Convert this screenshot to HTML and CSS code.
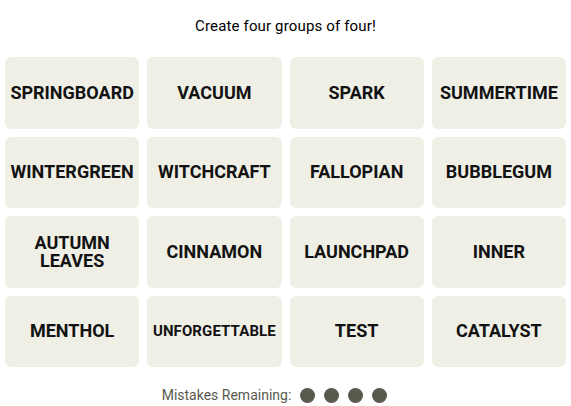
FILE: index.html
```html
<!DOCTYPE html>
<html lang="en">
<head>
<meta charset="utf-8">
<title>Connections</title>
<link rel="stylesheet" href="styles.css">
</head>
<body>
<main class="game">
  <p class="prompt">Create four groups of four!</p>
  <section class="board">
    <div class="tile">SPRINGBOARD</div>
    <div class="tile">VACUUM</div>
    <div class="tile">SPARK</div>
    <div class="tile">SUMMERTIME</div>
    <div class="tile">WINTERGREEN</div>
    <div class="tile">WITCHCRAFT</div>
    <div class="tile">FALLOPIAN</div>
    <div class="tile">BUBBLEGUM</div>
    <div class="tile">AUTUMN<br>LEAVES</div>
    <div class="tile">CINNAMON</div>
    <div class="tile">LAUNCHPAD</div>
    <div class="tile">INNER</div>
    <div class="tile">MENTHOL</div>
    <div class="tile tile-small">UNFORGETTABLE</div>
    <div class="tile">TEST</div>
    <div class="tile">CATALYST</div>
  </section>
  <div class="mistakes">
    <span class="mistakes-label">Mistakes Remaining:</span>
    <span class="dots">
      <span class="dot"></span><span class="dot"></span><span class="dot"></span><span class="dot"></span>
    </span>
  </div>
</main>
</body>
</html>
```
FILE: styles.css
```css
html, body {
  margin: 0;
  padding: 0;
  background: #ffffff;
}
.game {
  padding: 16px 5px 0;
  font-family: Roboto, "Liberation Sans", Arial, sans-serif;
  color: #000;
}
.prompt {
  margin: 0 0 21px;
  font-size: 15px;
  line-height: 20px;
  letter-spacing: 0.15px;
  text-align: center;
  font-weight: 400;
}
.board {
  display: grid;
  grid-template-columns: repeat(4, 1fr);
  grid-auto-rows: 71.5px;
  gap: 8px;
}
.tile {
  background: #efefe6;
  border-radius: 6px;
  display: flex;
  align-items: center;
  justify-content: center;
  text-align: center;
  font-weight: 700;
  font-size: 18px;
  line-height: 18px;
  letter-spacing: 0;
  color: #121212;
}
.tile-small {
  font-size: 15px;
  letter-spacing: 0.1px;
}
.mistakes {
  margin-top: 18px;
  padding-right: 22px;
  display: flex;
  justify-content: center;
  align-items: center;
  gap: 9px;
  height: 20px;
}
.mistakes-label {
  font-size: 14px;
  color: #5a594e;
  line-height: 20px;
}
.dots {
  display: flex;
  gap: 9px;
}
.dot {
  width: 15px;
  height: 15px;
  border-radius: 50%;
  background: #5a594e;
}
```
